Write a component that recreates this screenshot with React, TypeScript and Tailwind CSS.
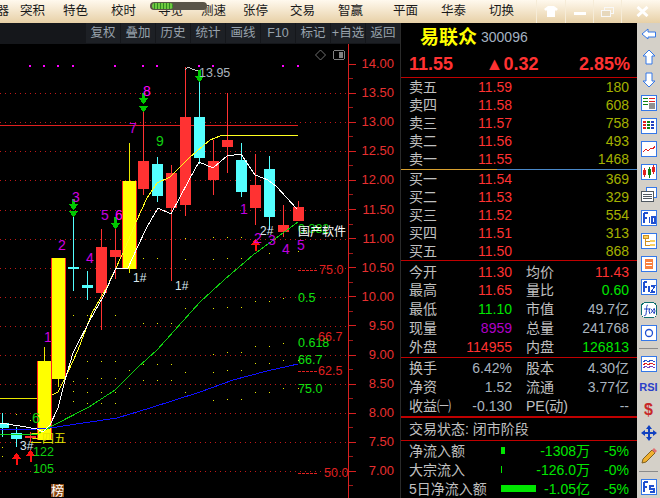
const menus = [
  ["突积", "w-[24px] ml-[11px]"],
  ["特色", "w-[24px] ml-[19px]"],
  ["校时", "w-[24px] ml-[24px]"],
  ["寻览", "w-[24px] ml-[23px]"],
  ["测速", "w-[24px] ml-[19px]"],
  ["张停", "w-[24px] ml-[18px]"],
  ["交易", "w-[24px] ml-[23px]"],
  ["智赢", "w-[24px] ml-[24px]"],
  ["平面", "w-[24px] ml-[31px]"],
  ["华泰", "w-[24px] ml-[24px]"],
  ["切换", "w-[24px] ml-[24px]"],
];

const tools = ["复权", "叠加", "历史", "统计", "画线", "F10", "标记", "+自选", "返回"];

const RED = "#ff3232";
const GREEN = "#00e600";
const GRAY = "#a9b4bf";

const askRows = [
  ["卖五", "11.59", "180"],
  ["卖四", "11.58", "608"],
  ["卖三", "11.57", "758"],
  ["卖二", "11.56", "493"],
  ["卖一", "11.55", "1468"],
];
const bidRows = [
  ["买一", "11.54", "369"],
  ["买二", "11.53", "329"],
  ["买三", "11.52", "554"],
  ["买四", "11.51", "313"],
  ["买五", "11.50", "868"],
];

const dayStats = [
  ["今开", "11.30", RED, "均价", "11.43", RED],
  ["最高", "11.65", RED, "量比", "0.60", GREEN],
  ["最低", "11.10", GREEN, "市值", "49.7亿", GRAY],
  ["现量", "8959", "#b000c8", "总量", "241768", GRAY],
  ["外盘", "114955", RED, "内盘", "126813", GREEN],
];
const baseStats = [
  ["换手", "6.42%", GRAY, "股本", "4.30亿", GRAY],
  ["净资", "1.52", GRAY, "流通", "3.77亿", GRAY],
  ["收益㈠", "-0.130", GRAY, "PE(动)", "--", GRAY],
];

const flows = [
  { label: "净流入额", bar: 4, value: "-1308万", pct: "-5%" },
  { label: "大宗流入", bar: 1, value: "-126.0万", pct: "-0%" },
  { label: "5日净流入额", bar: 35, value: "-1.05亿", pct: "-5%" },
];

type Candle = { x: number; top: number; bottom: number; hi: number; lo: number; kind: "red" | "cyan" | "yellow"; w?: number };

const candles: Candle[] = [
  { x: 2, top: 423, bottom: 428, hi: 413, lo: 437, kind: "cyan", w: 12 },
  { x: 16, top: 433, bottom: 439, hi: 427, lo: 447, kind: "cyan" },
  { x: 30, top: 436, bottom: 438, hi: 432, lo: 442, kind: "red" },
  { x: 44, top: 361, bottom: 440, hi: 347, lo: 440, kind: "yellow" },
  { x: 58, top: 258, bottom: 379, hi: 258, lo: 387, kind: "yellow" },
  { x: 73, top: 267, bottom: 269, hi: 217, lo: 291, kind: "cyan" },
  { x: 87, top: 285, bottom: 288, hi: 271, lo: 300, kind: "cyan" },
  { x: 101, top: 247, bottom: 293, hi: 229, lo: 330, kind: "red" },
  { x: 115, top: 250, bottom: 257, hi: 228, lo: 279, kind: "red" },
  { x: 129, top: 181, bottom: 269, hi: 143, lo: 273, kind: "yellow" },
  { x: 143, top: 161, bottom: 189, hi: 110, lo: 195, kind: "red" },
  { x: 157, top: 164, bottom: 196, hi: 157, lo: 202, kind: "cyan" },
  { x: 171, top: 173, bottom: 208, hi: 165, lo: 281, kind: "red" },
  { x: 185, top: 117, bottom: 205, hi: 67, lo: 216, kind: "red" },
  { x: 199, top: 117, bottom: 158, hi: 78, lo: 164, kind: "cyan" },
  { x: 213, top: 161, bottom: 180, hi: 140, lo: 195, kind: "red" },
  { x: 227, top: 140, bottom: 147, hi: 93, lo: 173, kind: "red" },
  { x: 241, top: 160, bottom: 192, hi: 143, lo: 197, kind: "cyan" },
  { x: 255, top: 185, bottom: 208, hi: 154, lo: 225, kind: "red" },
  { x: 269, top: 169, bottom: 217, hi: 156, lo: 230, kind: "cyan" },
  { x: 283, top: 225, bottom: 232, hi: 205, lo: 237, kind: "red" },
  { x: 298, top: 207, bottom: 221, hi: 201, lo: 221, kind: "red" },
];

const whiteLine = "0,423 20,426 37,429 43,432 50,425 58,408 65,380 73,353 90,320 103,297 116,268 128,268 137,248 147,227 158,208 171,214 189,180 199,162 213,168 227,156 241,154 255,175 268,180 277,187 297,209";
const yellowLine = "52,395 58,392 68,372 78,350 92,313 107,287 122,255 137,220 147,198 157,183 170,177 190,157 210,140 220,136 240,135 298,135";
const greenLine = "0,434 36,435 52,426 89,407 115,390 137,368 157,350 200,302 224,280 253,255 298,222";
const blueLine = "0,429 23,430 50,428 83,423 117,418 150,408 200,392 233,380 267,371 298,364";

const gridLevels = [93, 122, 151, 180, 210, 239, 268, 297, 326, 355, 384, 413, 442, 471];
const axisLabels = ["14.00", "13.50", "13.00", "12.50", "12.00", "11.50", "11.00", "10.50", "10.00", "9.50", "9.00", "8.50", "8.00", "7.50", "7.00"];
const purpleDots = [30, 44, 58, 73, 115, 143, 157, 199, 213, 283, 298];

const yellowDots = [
  [2, 447], [2, 456], [16, 414], [30, 420],
  [73, 391], [73, 401], [73, 381], [87, 361], [101, 361], [115, 361],
  [87, 378], [101, 378], [115, 378], [87, 392], [101, 392], [115, 392], [87, 403], [101, 403], [115, 403],
  [73, 315], [87, 315], [101, 315], [115, 315],
  [129, 370], [129, 388], [143, 364], [157, 364], [171, 364], [143, 380], [157, 380], [171, 380],
  [143, 258], [157, 258], [171, 258], [185, 259], [143, 323], [157, 323], [171, 323], [185, 308], [185, 238], [185, 372], [185, 392],
  [213, 308], [227, 307], [241, 307], [213, 354], [227, 352], [241, 352], [213, 372], [227, 370], [241, 370], [213, 400], [227, 399], [241, 399],
  [213, 237], [227, 237], [241, 237], [213, 259], [227, 258], [241, 258],
  [255, 301], [269, 301], [283, 298], [255, 346], [269, 346], [283, 343], [255, 363], [269, 363], [283, 360], [255, 392], [269, 392], [283, 388],
  [269, 253], [298, 251], [298, 360], [298, 388],
];

function DownArrow({ x, top, tip }: { x: number; top?: number; tip: number }) {
  return (
    <g fill="#00c800">
      {top !== undefined ? <rect x={x - 1} y={top} width={3} height={tip - top - 3} /> : null}
      <polygon points={`${x - 4.5},${tip - 6} ${x + 5.5},${tip - 6} ${x + 0.5},${tip}`} />
    </g>
  );
}

function UpArrow({ x, y }: { x: number; y: number }) {
  return (
    <g fill="#ff1010">
      <polygon points={`${x + 0.5},${y} ${x + 5.5},${y + 6} ${x - 4.5},${y + 6}`} />
      <rect x={x - 0.5} y={y + 5} width={2} height={7} />
    </g>
  );
}

function Label({ x, y, fill, size = 14, children }: { x: number; y: number; fill: string; size?: number; children: React.ReactNode }) {
  return (
    <text x={x} y={y} fill={fill} fontSize={size}>
      {children}
    </text>
  );
}

function KLineChart() {
  return (
    <svg width={400} height={454} viewBox="0 44 400 454" shapeRendering="crispEdges" className="block">
      {gridLevels.map((y) => (
        <line key={y} x1={0} x2={347} y1={y + 0.5} y2={y + 0.5} stroke="#c01818" strokeDasharray="1 4" />
      ))}
      <line x1={0} x2={298} y1={125.5} y2={125.5} stroke="#e02020" />
      <line x1={0} x2={37} y1={398.5} y2={398.5} stroke="#e8e800" />

      <line x1={348.5} x2={348.5} y1={44} y2={498} stroke="#d82020" />
      {axisLabels.map((label, i) => {
        const y = 63.5 + i * 29.1;
        return (
          <g key={label}>
            <line x1={349} x2={356} y1={Math.round(y) + 0.5} y2={Math.round(y) + 0.5} stroke="#d82020" />
            <line x1={349} x2={353} y1={Math.round(y + 14.5) + 0.5} y2={Math.round(y + 14.5) + 0.5} stroke="#a01818" />
            <text x={394} y={y + 4.5} textAnchor="end" fill="#e83030" fontSize={13} shapeRendering="auto">
              {label}
            </text>
          </g>
        );
      })}

      {purpleDots.map((x) => (
        <rect key={x} x={x - 1} y={65} width={2} height={2} fill="#ff00ff" />
      ))}
      {yellowDots.map(([x, y]) => (
        <rect key={`${x}-${y}`} x={x} y={y} width={1} height={1} fill="#e8e800" />
      ))}

      {candles.map((c) => {
        const w = c.w ?? 11;
        if (c.kind === "yellow") {
          return (
            <g key={c.x}>
              <rect x={c.x} y={c.hi} width={1} height={c.lo - c.hi} fill="#e8e800" />
              <rect x={c.x - 7} y={c.top} width={15} height={c.bottom - c.top} fill="#ff2020" />
              <rect x={c.x - 6} y={c.top} width={13} height={c.bottom - c.top} fill="#ffff00" />
            </g>
          );
        }
        const color = c.kind === "red" ? "#ff3232" : "#54ffff";
        return (
          <g key={c.x}>
            <rect x={c.x} y={c.hi} width={1} height={c.lo - c.hi} fill={color} />
            <rect x={c.x - 5} y={c.top} width={w} height={c.bottom - c.top} fill={color} />
          </g>
        );
      })}

      <polyline points={blueLine} fill="none" stroke="#1010ff" />
      <polyline points={greenLine} fill="none" stroke="#10d010" />
      <polyline points={yellowLine} fill="none" stroke="#ffff20" />
      <polyline points={whiteLine} fill="none" stroke="#ffffff" />

      <DownArrow x={143} top={93} tip={104} />
      <DownArrow x={143} tip={112} />
      <DownArrow x={73} top={199} tip={210} />
      <DownArrow x={73} tip={217} />
      <DownArrow x={115} top={217} tip={229} />
      <DownArrow x={199} top={70} tip={82} />
      <UpArrow x={16} y={453} />
      <UpArrow x={30} y={450} />
      <UpArrow x={255} y={239} />

      <polyline points="185,70 188,67 192,69 198,71" fill="none" stroke="#c8c8c8" />

      <g shapeRendering="auto">
        <Label x={199} y={77} fill="#aab4be" size={12.5}>13.95</Label>
        <Label x={143} y={96} fill="#ff00ff">8</Label>
        <Label x={129} y={133} fill="#c000e0">7</Label>
        <Label x={156} y={146} fill="#10d010">9</Label>
        <Label x={72} y={202} fill="#d000e0">3</Label>
        <Label x={101} y={220} fill="#c000e0">5</Label>
        <Label x={115} y={220} fill="#ff00ff">6</Label>
        <Label x={58} y={250} fill="#d000e0">2</Label>
        <Label x={86} y={263} fill="#d000e0">4</Label>
        <Label x={44} y={342} fill="#d000e0">1</Label>
        <Label x={240} y={214} fill="#c000e0">1</Label>
        <Label x={254} y={243} fill="#d000e0">2</Label>
        <Label x={268} y={245} fill="#c000e0">3</Label>
        <Label x={282} y={254} fill="#c000e0">4</Label>
        <Label x={297} y={250} fill="#c000e0">5</Label>
        <Label x={133} y={282} fill="#d8e8f0" size={12}>1#</Label>
        <Label x={175} y={290} fill="#d8e8f0" size={12}>1#</Label>
        <Label x={260} y={235} fill="#d8e8f0" size={12}>2#</Label>
        <Label x={20} y={450} fill="#d8e8f0" size={12}>3#</Label>
        <Label x={32} y={423} fill="#10d010">6</Label>
        <Label x={33} y={456} fill="#10d010" size={12.5}>122</Label>
        <Label x={33} y={473} fill="#10d010" size={12.5}>105</Label>
        <Label x={30} y={443} fill="#e8e800" size={12}>三四五</Label>
        <Label x={298} y={233} fill="#10d010" size={12.5}>0.382</Label>
        <Label x={298} y={236} fill="#ffffff" size={12}>国产软件</Label>
        <Label x={298} y={302} fill="#10e010" size={12.5}>0.5</Label>
        <Label x={298} y={347} fill="#10e010" size={12.5}>0.618</Label>
        <Label x={298} y={364} fill="#10e010" size={12.5}>66.7</Label>
        <Label x={298} y={393} fill="#10e010" size={12.5}>75.0</Label>
        <Label x={318} y={341} fill="#e02020" size={12.5}>66.7</Label>
        <Label x={318} y={375} fill="#e02020" size={12.5}>62.5</Label>
        <Label x={319} y={274} fill="#e02020" size={12.5}>75.0</Label>
        <Label x={324} y={477} fill="#e02020" size={12.5}>50.0</Label>
      </g>
      {[270, 371, 473].map((y) => (
        <line key={y} x1={298} x2={318} y1={y + 0.5} y2={y + 0.5} stroke="#e02020" strokeDasharray="3 1" />
      ))}

      <rect x={51} y={484} width={13} height={13} fill="#8a4a14" />
      <g shapeRendering="auto">
        <Label x={51} y={495} fill="#ffffff" size={13}>榜</Label>
      </g>

      <polygon points="320.5,50 325.5,55 320.5,60 315.5,55" fill="none" stroke="#707070" shapeRendering="auto" />
      <rect x={333.5} y={50.5} width={11} height={9} rx={2} fill="none" stroke="#808080" />
      <rect x={339} y={52} width={4} height={6} fill="#808080" />
    </svg>
  );
}

function Icon({ children }: { children: React.ReactNode }) {
  return (
    <div className="flex h-[23px] w-full items-center justify-center">
      <svg width={16} height={16} viewBox="0 0 16 16" shapeRendering="crispEdges">
        {children}
      </svg>
    </div>
  );
}

function Box({ children }: { children?: React.ReactNode }) {
  return (
    <>
      <rect x={0.5} y={0.5} width={15} height={15} fill="#ffffff" stroke="#3478e8" />
      {children}
    </>
  );
}

function ToolRail() {
  const bars = (colors: string[]) =>
    colors.map((c, i) => <rect key={i} x={2 + (i % 3) * 4} y={3 + Math.floor(i / 3) * 3} width={3} height={2} fill={c} />);
  return (
    <div className="flex w-[23px] shrink-0 flex-col items-center bg-[#d4d0c8]">
      <Icon>
        <polygon points="1,8 7,3 7,6 14.5,6 14.5,11 7,11 7,13" fill="#ffffff" stroke="#3478e8" shapeRendering="auto" />
      </Icon>
      <Icon>
        <polygon points="8,1 14,7 11,7 11,15 5,15 5,7 2,7" fill="#ffffff" stroke="#3478e8" shapeRendering="auto" />
      </Icon>
      <Icon>
        <polygon points="8,15 14,9 11,9 11,1 5,1 5,9 2,9" fill="#ffffff" stroke="#3478e8" shapeRendering="auto" />
      </Icon>
      <Icon>
        <Box>
          <rect x={2} y={3} width={5} height={1} fill="#108010" />
          <rect x={2} y={6} width={5} height={1} fill="#108010" />
          <rect x={2} y={9} width={5} height={1} fill="#108010" />
          <rect x={8} y={3} width={6} height={1} fill="#e02020" />
          <rect x={8} y={6} width={6} height={1} fill="#e02020" />
          <circle cx={11} cy={11} r={3.5} fill="#909090" />
        </Box>
      </Icon>
      <Icon>
        <Box>{bars(["#e02020", "#108010", "#2040c0", "#e02020", "#108010", "#2040c0", "#e02020", "#108010", "#2040c0"])}</Box>
      </Icon>
      <Icon>
        <Box>
          <polyline points="2,11 5,8 7,10 10,7 12,8 14,5" fill="none" stroke="#e02020" />
        </Box>
      </Icon>
      <Icon>
        <Box>
          <rect x={2} y={6} width={3} height={5} fill="#e02020" />
          <rect x={3} y={4} width={1} height={9} fill="#e02020" />
          <rect x={7} y={5} width={3} height={6} fill="#108010" />
          <rect x={8} y={3} width={1} height={11} fill="#108010" />
          <rect x={11} y={3} width={3} height={5} fill="#e02020" />
          <rect x={12} y={1} width={1} height={9} fill="#e02020" />
        </Box>
      </Icon>
      <Icon>
        <rect x={5.5} y={0.5} width={10} height={10} fill="#ffffff" stroke="#3478e8" />
        <rect x={0.5} y={4.5} width={12} height={10} fill="#ffffff" stroke="#505860" />
        <rect x={2} y={7} width={9} height={1} fill="#505860" />
        <rect x={2} y={9} width={9} height={1} fill="#505860" />
        <rect x={2} y={11} width={9} height={1} fill="#505860" />
      </Icon>
      <Icon>
        <Box>
          <path d="M3 3h4M3 3v10M3 8h3M8.5 7v6M11 7h3v6h-3z" fill="none" stroke="#2050d0" strokeWidth={1.2} />
        </Box>
      </Icon>
      <Icon>
        <Box>
          <rect x={2} y={2} width={5} height={3} fill="#f8d060" stroke="#d09020" />
          <rect x={9} y={7} width={5} height={2} fill="#f8d060" />
          <rect x={9} y={11} width={5} height={2} fill="#f8d060" />
          <path d="M4 5v7h5M4 8h5" fill="none" stroke="#d09020" />
        </Box>
      </Icon>
      <Icon>
        <Box>
          <rect x={4} y={3} width={8} height={10} fill="#f88040" />
          <rect x={5} y={6} width={6} height={1} fill="#ffffff" />
          <rect x={5} y={9} width={6} height={1} fill="#ffffff" />
        </Box>
      </Icon>
      <Icon>
        <Box>
          <path d="M3 3h3M3 3v10M3 8h3M8 7v6M10 7h4l-4 6h4" fill="none" stroke="#2050d0" strokeWidth={1.2} />
        </Box>
      </Icon>
      <Icon>
        <rect x={0.5} y={0.5} width={15} height={15} rx={4} fill="#ffffff" stroke="#107070" />
        <path d="M7 3c-2 0-1 4-2 9c0 2-2 2-2 1M3 7h5M9 6l-1 3l1 3M13 6l1 3l-1 3M10 7l3 4M13 7l-3 4" fill="none" stroke="#2040c0" shapeRendering="auto" />
      </Icon>
      <Icon>
        <Box>
          <circle cx={8} cy={8} r={3.5} fill="none" stroke="#2050d0" shapeRendering="auto" strokeWidth={1.3} />
        </Box>
      </Icon>
      <div className="flex h-[8px] w-full items-center justify-center">
        <div className="h-px w-[19px] bg-[#8a8a8a]" />
      </div>
      <Icon>
        <Box>
          <polyline points="2,6 5,4 7,6 10,4 14,6" fill="none" stroke="#2050d0" />
          <polyline points="2,9 5,7 7,9 10,7 14,9" fill="none" stroke="#e02020" />
          <polyline points="2,12 5,10 7,12 10,10 14,12" fill="none" stroke="#7040c0" />
        </Box>
      </Icon>
      <div className="flex h-[23px] w-full items-center justify-center text-[11px] font-bold text-[#2a40c8]">RSI</div>
      <div className="flex h-[23px] w-full items-center justify-center text-[16px] font-bold text-[#c82828]">$</div>
      <Icon>
        <polygon points="8,0 11,4 9,4 9,7 12,7 12,5 16,8 12,11 12,9 9,9 9,12 11,12 8,16 5,12 7,12 7,9 4,9 4,11 0,8 4,5 4,7 7,7 7,4 5,4" fill="#1040c0" shapeRendering="auto" />
      </Icon>
      <Icon>
        <polygon points="1,15 2,11 11,2 14,5 5,14" fill="#f0b030" stroke="#806020" shapeRendering="auto" />
        <polygon points="11,2 13,0 16,3 14,5" fill="#e07070" shapeRendering="auto" />
      </Icon>
      <div className="flex h-[8px] w-full items-center justify-center">
        <div className="h-px w-[19px] bg-[#8a8a8a]" />
      </div>
      <Icon>
        <Box>
          <path d="M3 3h4M3 3v10M3 8h3M13 7h-4v3h4v3h-4" fill="none" stroke="#2050d0" strokeWidth={1.2} />
        </Box>
      </Icon>
    </div>
  );
}

function BookRow({ label, price, qty }: { label: string; price: string; qty: string }) {
  return (
    <div className="grid h-[18px] grid-cols-[58px_45px_1fr] items-center pl-2 pr-2 leading-none">
      <span className="text-[#c0c0c0]">{label}</span>
      <span className="text-right text-[#ff3232]">{price}</span>
      <span className="text-right text-[#a4b000]">{qty}</span>
    </div>
  );
}

function StatRow({ row }: { row: (typeof dayStats)[number] }) {
  const [a, b, bc, c, d, dc] = row;
  return (
    <div className="grid h-[19px] grid-cols-[48px_55px_56px_1fr] items-center pl-2 pr-2 leading-none">
      <span className="whitespace-nowrap text-[#c0c0c0]">{a}</span>
      <span className="text-right" style={{ color: bc }}>{b}</span>
      <span className="ml-[14px] whitespace-nowrap text-[#c0c0c0]">{c}</span>
      <span className="text-right" style={{ color: dc }}>{d}</span>
    </div>
  );
}

export default function App() {
  return (
    <div className="flex h-[498px] w-[660px] flex-col overflow-hidden bg-black font-['Liberation_Sans','Noto_Sans_CJK_SC',sans-serif] text-[14px]">
      <div className="relative flex h-[23px] shrink-0 items-center bg-gradient-to-b from-[#fff9ee] to-[#e7d0a6] text-[12.5px] text-[#1a1a1a]">
        <span className="w-[9px] shrink-0 overflow-hidden whitespace-nowrap [direction:rtl]">器</span>
        {menus.map(([name, cls]) => (
          <span key={name} className={`${cls} whitespace-nowrap`}>
            {name}
          </span>
        ))}
        <div className="ml-auto flex h-full w-[124px] items-center">
          <div className="flex h-full w-[29px] items-center justify-center border-l border-[#f6ecd8]">
            <svg width={14} height={11} viewBox="0 0 14 11">
              <polygon points="4,0 10,0 14,3 12,5 11,4 11,11 3,11 3,4 2,5 0,3" fill="#ffffff" />
            </svg>
          </div>
          <div className="flex h-full w-[28px] items-end justify-center border-l border-[#f6ecd8] pb-[8px]">
            <div className="h-[3px] w-[12px] bg-white" />
          </div>
          <div className="flex h-full w-[28px] items-center justify-center border-l border-[#f6ecd8]">
            <svg width={13} height={10} viewBox="0 0 13 10">
              <rect x={3.5} y={0.5} width={9} height={6} fill="none" stroke="#f8f8f8" />
              <rect x={0.5} y={3.5} width={9} height={6} fill="#e7d8bc" stroke="#f8f8f8" />
            </svg>
          </div>
          <div className="flex h-full flex-1 items-center justify-center border-l border-[#f6ecd8] pl-[2px]">
            <svg width={13} height={11} viewBox="0 0 13 11">
              <path d="M1.5 1l10 9M11.5 1l-10 9" stroke="#ffffff" strokeWidth={3} />
            </svg>
          </div>
        </div>
        <div className="absolute left-[150px] top-[2px] flex h-[8px] w-[57px] items-center rounded-full bg-[#5a5446] pl-[2px]">
          <div className="flex h-[6px] w-[21px] overflow-hidden rounded-full bg-[#70c840]">
            {Array.from({ length: 7 }, (_, i) => (
              <div key={i} className="ml-[2px] h-full w-px bg-[#2e8a20]" />
            ))}
          </div>
        </div>
      </div>

      <div className="flex min-h-0 flex-1">
        <div className="flex w-[400px] shrink-0 flex-col">
          <div className="flex h-[21px] shrink-0 justify-end gap-px bg-[#15171b] pl-[86px]">
            {tools.map((t) => (
              <div key={t} className="flex h-[20px] w-[34px] items-center justify-center whitespace-nowrap bg-[#1d2025] text-[12.5px] text-[#98a2ac]">
                {t}
              </div>
            ))}
          </div>
          <KLineChart />
        </div>

        <div className="flex w-[237px] shrink-0 flex-col border-l border-[#2a2a2a] bg-black">
          <div className="flex h-[27px] shrink-0 items-center pl-[19px] pt-[1px]">
            <span className="text-[19px] font-bold leading-none text-[#ffff00]">易联众</span>
            <span className="ml-[4px] text-[#a4b2c0]">300096</span>
          </div>
          <div className="flex h-[27px] shrink-0 items-center justify-between pl-2 pr-[7px] text-[18px] font-bold leading-none text-[#ff3232]">
            <span>11.55</span>
            <span className="mr-[8px]">▲0.32</span>
            <span>2.85%</span>
          </div>
          <div className="h-px shrink-0 bg-[#c00000]" />
          {askRows.map(([l, p, q]) => (
            <BookRow key={l} label={l} price={p} qty={q} />
          ))}
          <div className="mt-[1px] mb-[1px] flex h-px shrink-0">
            <div className="w-[96px] bg-[#d8a030]" />
            <div className="flex-1 bg-[#4a88c8]" />
          </div>
          {bidRows.map(([l, p, q]) => (
            <BookRow key={l} label={l} price={p} qty={q} />
          ))}
          <div className="h-px shrink-0 bg-[#c00000]" />
          <div className="h-px shrink-0" />
          {dayStats.map((row) => (
            <StatRow key={row[0]} row={row} />
          ))}
          <div className="h-px shrink-0 bg-[#c00000]" />
          <div className="h-px shrink-0" />
          {baseStats.map((row) => (
            <StatRow key={row[0]} row={row} />
          ))}
          <div className="mt-[1px] h-[2px] shrink-0 bg-[#c00000]" />
          <div className="flex h-[22px] shrink-0 items-center pl-2 leading-none text-[#c0c0c0]">交易状态: 闭市阶段</div>
          <div className="h-px shrink-0 bg-[#c00000]" />
          {flows.map((f) => (
            <div key={f.label} className="grid h-[19px] grid-cols-[92px_1fr_39px] items-center pl-2 pr-2 leading-none">
              <span className="whitespace-nowrap text-[#c0c0c0]">{f.label}</span>
              <span className="relative text-right text-[#00e600]">
                <span className="absolute left-0 top-[3px] h-[7px] bg-[#00e600]" style={{ width: f.bar }} />
                {f.value}
              </span>
              <span className="text-right text-[#00e600]">{f.pct}</span>
            </div>
          ))}
        </div>

        <ToolRail />
      </div>
    </div>
  );
}
